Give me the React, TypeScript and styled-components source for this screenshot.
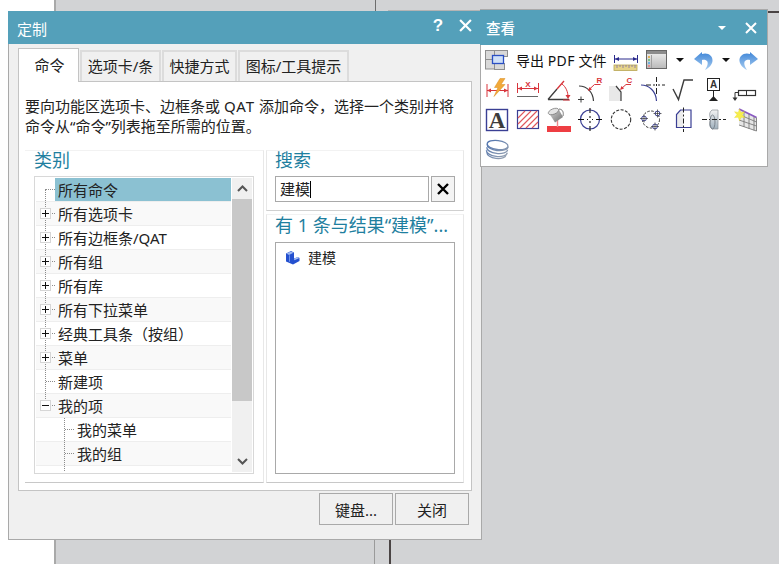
import React from "react";
import styled, { createGlobalStyle } from "styled-components";

const Global = createGlobalStyle`
  html, body { margin: 0; padding: 0; background: #fff; }
  * { box-sizing: border-box; }
`;

const FONT = `"Noto Sans", "Noto Sans CJK SC", sans-serif`;
const TEAL = "#54a0ba";
const HEAD = "#1f7f9f";

const Desktop = styled.div`
  position: relative;
  width: 779px;
  height: 564px;
  overflow: hidden;
  background: #fff;
  font-family: ${FONT};
  font-size: 15px;
  color: #222;
`;
const Workspace = styled.div`
  position: absolute;
  left: 54px;
  top: 0;
  right: 0;
  bottom: 0;
  background: #d2d3d5;
  border-left: 2px solid #a9a9a9;
`;
const Seam = styled.div<{ $x: number; $y: number; $h: number; $w: number; $c: string }>`
  position: absolute;
  left: ${(p) => p.$x}px;
  top: ${(p) => p.$y}px;
  width: ${(p) => p.$w}px;
  height: ${(p) => p.$h}px;
  background: ${(p) => p.$c};
`;

/* dialog window */
const Dialog = styled.div`
  position: absolute;
  left: 8px;
  top: 11px;
  width: 474px;
  height: 529px;
  display: flex;
  flex-direction: column;
`;
const TitleBar = styled.div`
  flex: 0 0 33px;
  background: ${TEAL};
  color: #fff;
  display: flex;
  align-items: center;
  padding: 3px 10px 0 9px;
  font-size: 15px;
`;
const TitleText = styled.span`
  flex: 1;
  line-height: 30px;
`;
const HelpMark = styled.span`
  font-family: "Liberation Sans", sans-serif;
  font-weight: 700;
  font-size: 17px;
  width: 16px;
  margin-right: 13px;
  margin-top: -7px;
  text-align: center;
`;
const TitleIcons = styled.svg`
  display: block;
  margin-top: -7px;
  flex: none;
`;
const DialogBody = styled.div`
  flex: 1;
  background: #f0f0f0;
  border: 1px solid #a9a9a9;
  border-top: none;
  padding: 4px 9px 0 9px;
  display: flex;
  flex-direction: column;
`;
const Tabs = styled.div`
  display: flex;
  align-items: flex-end;
  height: 34px;
  gap: 1px;
  position: relative;
  z-index: 1;
`;
const Tab = styled.div<{ $active?: boolean; $w: number }>`
  width: ${(p) => p.$w}px;
  height: ${(p) => (p.$active ? 34 : 31)}px;
  margin-bottom: ${(p) => (p.$active ? 0 : 1)}px;
  padding: ${(p) => (p.$active ? "0 0 2px 2px" : "0 0 2px")};
  background: ${(p) => (p.$active ? "#fff" : "#f0f0f0")};
  border: ${(p) => (p.$active ? "1px solid #c4c4c4" : "2px solid #dcdcdc")};
  border-bottom: ${(p) => (p.$active ? "none" : "0")};
  display: flex;
  align-items: center;
  justify-content: center;
  white-space: nowrap;
  line-height: 26px;
`;
const Panel = styled.div`
  height: 410px;
  margin-top: -1px;
  background: #fff;
  border: 1px solid #c4c4c4;
  display: flex;
  flex-direction: column;
`;
const Intro = styled.p`
  margin: 0;
  padding: 14px 0 0 6px;
  line-height: 20px;
  height: 54px;
  white-space: nowrap;
`;
const Latin = styled.span`
  letter-spacing: 1px;
`;
const Groups = styled.div`
  margin: 14px 0 0 6px;
  display: flex;
  width: 439px;
  height: 333px;
  gap: 2px;
`;
const LeftGroup = styled.section`
  width: 239px;
  border-top: 1px solid #f2f2f2;
  border-right: 1px solid #e8e8e8;
  border-bottom: 1px solid #c8c8c8;
  padding-left: 9px;
`;
const RightGroup = styled.section`
  flex: 1;
  display: flex;
  flex-direction: column;
`;
const SearchSection = styled.div`
  height: 61px;
  border-top: 1px solid #f2f2f2;
  border-right: 1px solid #e8e8e8;
  border-left: 1px solid #e8e8e8;
  border-bottom: 1px solid #d0d0d0;
  padding: 0 8px;
`;
const ResultSection = styled.div`
  margin-top: 3px;
  flex: 1;
  border-top: 1px solid #f2f2f2;
  border-right: 1px solid #e8e8e8;
  border-left: 1px solid #e8e8e8;
  border-bottom: 1px solid #c8c8c8;
  padding: 0 8px;
`;
const GroupHeading = styled.h3<{ $h?: number; $lh?: number }>`
  margin: 0;
  height: ${(p) => p.$h ?? 25}px;
  line-height: ${(p) => p.$lh ?? 18}px;
  font-weight: 400;
  font-size: 18px;
  color: ${HEAD};
  white-space: nowrap;
`;
const TreeBox = styled.div`
  width: 220px;
  height: 298px;
  border: 1px solid #d8d8d8;
  padding: 1px;
  display: flex;
  gap: 1px;
  overflow: hidden;
`;
const Rows = styled.div`
  width: 195px;
  height: 293px;
  overflow: hidden;
`;
const Row = styled.div<{ $alt: boolean; $level: number }>`
  position: relative;
  height: 24px;
  padding-left: ${(p) => 19 + p.$level * 19}px;
  background: ${(p) => (p.$alt ? "#f9f9f9" : "#fff")};
  border-bottom: 1px solid #eeeeee;
  display: flex;
`;
const Label = styled.div<{ $sel?: boolean }>`
  flex: 1;
  padding-left: 3px;
  padding-top: 1px;
  line-height: 23px;
  height: 23px;
  white-space: nowrap;
  background: ${(p) => (p.$sel ? "#8bc1d2" : "transparent")};
`;
const VLine = styled.i<{ $x: number; $top: number; $bottom: number }>`
  position: absolute;
  left: ${(p) => p.$x}px;
  top: ${(p) => p.$top}px;
  bottom: ${(p) => p.$bottom}px;
  border-left: 1px dotted #8c8c8c;
`;
const HLine = styled.i<{ $x: number; $w: number }>`
  position: absolute;
  left: ${(p) => p.$x}px;
  width: ${(p) => p.$w}px;
  top: 11px;
  border-top: 1px dotted #8c8c8c;
`;
const Expander = styled.i<{ $open?: boolean }>`
  position: absolute;
  left: 4px;
  top: 6px;
  width: 11px;
  height: 11px;
  background: #fff;
  border: 1px solid #d6d6d6;
  &::before {
    content: "";
    position: absolute;
    left: 1px;
    right: 1px;
    top: 4px;
    height: 1px;
    background: #111;
  }
  &::after {
    content: "";
    display: ${(p) => (p.$open ? "none" : "block")};
    position: absolute;
    top: 1px;
    bottom: 1px;
    left: 4px;
    width: 1px;
    background: #111;
  }
`;
const ScrollBar = styled.div`
  width: 20px;
  height: 294px;
  background: #f0f0f0;
  display: flex;
  flex-direction: column;
`;
const ScrollButton = styled.div<{ $h: number; $end?: boolean }>`
  height: ${(p) => p.$h}px;
  display: flex;
  align-items: ${(p) => (p.$end ? "flex-end" : "center")};
  justify-content: center;
  padding-bottom: ${(p) => (p.$end ? 7 : 0)}px;
`;
const ScrollThumb = styled.div`
  height: 202px;
  background: #c8c8c8;
`;
const SearchRow = styled.div`
  display: flex;
  gap: 2px;
  height: 26px;
`;
const SearchInput = styled.div`
  width: 154px;
  border: 1px solid #a9a9a9;
  background: #fff;
  padding-left: 4px;
  line-height: 24px;
  display: flex;
  align-items: center;
`;
const Caret = styled.span`
  display: block;
  width: 1px;
  height: 17px;
  background: #000;
`;
const ClearButton = styled.div`
  width: 24px;
  border: 1px solid #a9a9a9;
  background: #f4f4f4;
  display: flex;
  align-items: center;
  justify-content: center;
`;
const ResultList = styled.div`
  height: 232px;
  border: 1px solid #a9a9a9;
  background: #fff;
  padding: 2px 0 0 9px;
`;
const ResultItem = styled.div`
  display: flex;
  align-items: center;
  gap: 8px;
  height: 24px;
  font-size: 14px;
`;
const Footer = styled.div`
  display: flex;
  justify-content: flex-end;
  gap: 2px;
  padding-right: 3px;
  margin-top: 2px;
`;
const FooterButton = styled.div`
  width: 74px;
  height: 32px;
  border: 1px solid #a9a9a9;
  background: #f0f0f0;
  display: flex;
  align-items: center;
  justify-content: center;
`;

/* floating toolbar window */
const Palette = styled.div`
  position: absolute;
  left: 480px;
  top: 10px;
  width: 288px;
  height: 157px;
  background: #fff;
  border-right: 1px solid #a9a9a9;
  border-bottom: 1px solid #a9a9a9;
  border-left: 1px solid #a9a9a9;
  box-shadow: 0 -1px 0 #a9a9a9;
`;
const PaletteTitle = styled.div`
  height: 35px;
  margin-left: -1px;
  background: ${TEAL};
  color: #fff;
  font-size: 14.5px;
  font-weight: 500;
  display: flex;
  align-items: center;
  justify-content: space-between;
  padding: 0 10px 0 6px;
`;
const PaletteControls = styled.span`
  display: flex;
  align-items: center;
  gap: 19px;
  & > svg {
    margin-top: 0;
  }
`;
const WhiteCaret = styled.i`
  display: block;
  border-left: 4px solid transparent;
  border-right: 4px solid transparent;
  border-top: 4px solid #fff;
`;
const PaletteBody = styled.div`
  padding-left: 1px;
`;
const CommandRow = styled.div`
  display: flex;
  height: 30px;
  align-items: center;
`;
const CommandLabel = styled.span`
  width: 99px;
  padding-left: 4px;
  white-space: nowrap;
  font-size: 14px;
  color: #111;
`;
const Pdf = styled.span`
  letter-spacing: 0.4px;
`;
const DropCaret = styled.span`
  width: 16px;
  display: flex;
  justify-content: center;
  &::before {
    content: "";
    border-left: 4px solid transparent;
    border-right: 4px solid transparent;
    border-top: 4px solid #111;
  }
`;
const IconGrid = styled.div`
  display: grid;
  grid-template-columns: repeat(9, 31px);
  grid-auto-rows: 30px;
`;
const Ic = styled.svg.attrs({ viewBox: "0 0 30 30", width: 30, height: 30 })<{ $gap?: number }>`
  display: block;
  flex: none;
  margin-left: ${(p) => p.$gap ?? 0}px;
  font-family: "Liberation Sans", sans-serif;
`;

const RED = "#d8353c";
const NAVY = "#3a3f94";
const DARK = "#3d3d3d";

const tree: { t: string; level: number; kind: "leaf" | "plus" | "minus" }[] = [
  { t: "所有命令", level: 0, kind: "leaf" },
  { t: "所有选项卡", level: 0, kind: "plus" },
  { t: "所有边框条/QAT", level: 0, kind: "plus" },
  { t: "所有组", level: 0, kind: "plus" },
  { t: "所有库", level: 0, kind: "plus" },
  { t: "所有下拉菜单", level: 0, kind: "plus" },
  { t: "经典工具条（按组）", level: 0, kind: "plus" },
  { t: "菜单", level: 0, kind: "plus" },
  { t: "新建项", level: 0, kind: "leaf" },
  { t: "我的项", level: 0, kind: "minus" },
  { t: "我的菜单", level: 1, kind: "leaf" },
  { t: "我的组", level: 1, kind: "leaf" },
  { t: "我的库", level: 1, kind: "leaf" },
];

const Arrowed = ({ x1, x2, y }: { x1: number; x2: number; y: number }) => (
  <g fill={RED} stroke="none">
    <path d={`M${x1} ${y}l4 -2v4z`} />
    <path d={`M${x2} ${y}l-4 -2v4z`} />
  </g>
);

const UNDO =
  "M6 14L14 7V9C20 7 25 11 24.500 16C24 20 21 23 17 25C19.500 21 20.500 18 19 16C17.500 14.500 15.500 14.500 14 15V20Z";

const paletteIcons: React.ReactNode[] = [
  <Ic key="a1">
    <g stroke={RED} strokeWidth="1" fill="none">
      <path d="M5 9v13M26 9v13M5 15.500h21" />
    </g>
    <Arrowed x1={5} x2={26} y={15.5} />
    <path d="M18 3.500h5l-4 6h4l-11 12 4-9h-3.500z" fill="#f2a93a" stroke="#d98a1d" strokeWidth=".5" />
  </Ic>,
  <Ic key="a2">
    <path d="M4.500 8v10M25.500 8v10M4.500 13.500h21" stroke={RED} fill="none" />
    <Arrowed x1={5} x2={25} y={13.5} />
    <text x="15" y="12" textAnchor="middle" fontSize="8" fontWeight="700" fill={RED}>X</text>
    <path d="M4 21.500h21" stroke="#666" />
  </Ic>,
  <Ic key="a3">
    <path d="M4 24.500h21M4 24.500L13 14" stroke={DARK} strokeWidth="1.300" fill="none" />
    <path d="M13 14l7-8" stroke={RED} strokeWidth="1.300" />
    <path d="M18 9c4 3 6 8 6 13" stroke={RED} fill="none" />
    <path d="M21.500 20h5l-2.500 4z" fill={RED} />
    <path d="M19 25h7" stroke={RED} />
  </Ic>,
  <Ic key="a4">
    <path d="M4 11c8 0 14 6 14.500 15" stroke={DARK} strokeWidth="1.200" fill="none" />
    <path d="M3 24.500h6M6 21.500v6" stroke={DARK} />
    <path d="M13.500 15l6-5.500h6" stroke={RED} fill="none" />
    <path d="M13 16l1.500-4 2.500 2.500z" fill={RED} />
    <text x="21.500" y="7.500" fontSize="8" fontWeight="700" fill={RED}>R</text>
  </Ic>,
  <Ic key="a5">
    <path d="M3 11h7l5 6v9H3z" fill="#e8e8e8" />
    <path d="M10 11l5 6v9" stroke={DARK} strokeWidth="1.200" fill="none" />
    <path d="M15 14l5-4.500h5" stroke={RED} fill="none" />
    <path d="M14 15l1.500-4 2.500 2.500z" fill={RED} />
    <text x="20.500" y="7.500" fontSize="8" fontWeight="700" fill={RED}>C</text>
  </Ic>,
  <Ic key="a6">
    <path d="M4 10c8 0 15 6 15.500 16" stroke={NAVY} strokeWidth="1.200" fill="none" />
    <path d="M19.500 2v5M19.500 9v2M19.500 13v6M9 10h5M16 10h2M21 10h2M25 10h3" stroke="#222" />
  </Ic>,
  <Ic key="a7">
    <path d="M5 14l5.500 10.500L16 5h9" stroke={DARK} strokeWidth="1.400" fill="none" />
  </Ic>,
  <Ic key="a8">
    <rect x="8.500" y="3.500" width="12" height="12" fill="#fff" stroke="#222" />
    <text x="14.500" y="13" textAnchor="middle" fontSize="10" fontWeight="700" fill="#333">A</text>
    <path d="M14.500 16v6" stroke="#222" />
    <path d="M10 26l4.500-5 4.500 5z" fill="#222" />
  </Ic>,
  <Ic key="a9">
    <rect x="8.500" y="15.500" width="17" height="5" fill="#fff" stroke="#333" strokeWidth="1.200" />
    <path d="M16.500 15.500v5" stroke="#333" />
    <path d="M8.500 17.500H5v6" stroke="#333" fill="none" />
    <path d="M2.500 22.500h5L5 26z" fill="#333" />
  </Ic>,

  <Ic key="b1">
    <rect x="4.500" y="4.500" width="21" height="21" fill="#fff" stroke={NAVY} strokeWidth="1.400" />
    <text x="15" y="23" textAnchor="middle" fontSize="23" fontWeight="700" fill="#3c3c3c" fontFamily="Liberation Serif, serif">A</text>
  </Ic>,
  <Ic key="b2">
    <rect x="4.500" y="5.500" width="21" height="18" fill="#fff" stroke={NAVY} strokeWidth="1.200" />
    <path d="M5 13l7-7M5 19l13-13M7 23L24 6M13 23l12-12M19 23l6-6" stroke="#e0575c" strokeWidth="1.100" fill="none" />
  </Ic>,
  <Ic key="b3">
    <defs>
      <linearGradient id="pail" x1="0" y1="0" x2="1" y2="1">
        <stop offset="0" stopColor="#d9d9d9" />
        <stop offset="1" stopColor="#6f6f6f" />
      </linearGradient>
    </defs>
    <rect x="3" y="21" width="24" height="6" fill="#ee3e43" />
    <path d="M13.500 15v7" stroke="#ee8a8d" strokeWidth="1.400" />
    <path d="M5 8l9.500-4 4.500 8-8 5.500z" fill="url(#pail)" />
    <ellipse cx="9.500" cy="6.500" rx="5.500" ry="2.700" transform="rotate(-22 9.500 6.500)" fill="#e4e4e4" stroke="#777" strokeWidth=".7" />
    <path d="M15 4c3.500 0 5 3.500 4 7" stroke="#777" fill="none" />
  </Ic>,
  <Ic key="b4">
    <circle cx="15" cy="14.500" r="9.500" fill="none" stroke={NAVY} strokeWidth="1.200" />
    <path d="M15 3v5M15 11v2M15 16v2M15 21v5M3 14.500h6M12 14.500h1M17 14.500h1M21 14.500h6" stroke="#111" strokeWidth="1.100" />
  </Ic>,
  <Ic key="b5">
    <circle cx="15" cy="14.500" r="9.700" fill="none" stroke="#333" strokeWidth="1.100" strokeDasharray="3 1.500" />
  </Ic>,
  <Ic key="b6">
    <circle cx="14" cy="14.500" r="8.500" fill="none" stroke="#333" strokeDasharray="2.500 1.500" />
    {[[7, 13.5], [20.5, 8.5], [18, 21.5]].map(([x, y]) => (
      <g key={x}>
        <circle cx={x} cy={y} r="2.400" fill="#fff" stroke={NAVY} />
        <path d={`M${x} ${y - 4}v8M${x - 4} ${y}h8`} stroke="#333" strokeWidth=".7" />
      </g>
    ))}
  </Ic>,
  <Ic key="b7">
    <path d="M8.500 22.500V9.500l4-4.500H15v17.500z" fill="#ececec" />
    <path d="M8.500 22.500V9.500l4-4.500H23v17.500z" fill="none" stroke={NAVY} strokeWidth="1.200" />
    <path d="M15.500 2.500v5M15.500 9.500v2M15.500 13.500v5M15.500 20.500v2M15.500 24v3" stroke="#222" />
  </Ic>,
  <Ic key="b8">
    <defs>
      <linearGradient id="lens" x1="0" y1="0" x2="0" y2="1">
        <stop offset="0" stopColor="#f2f2f2" />
        <stop offset="1" stopColor="#9fb0bd" />
      </linearGradient>
    </defs>
    <path d="M13 5h6v19h-6c-3-2.500-3-5.500-1-9.500-2-4-2-7 1-9.500z" fill="url(#lens)" stroke="#8a8f96" strokeWidth=".7" />
    <ellipse cx="13.500" cy="17" rx="2.500" ry="7" fill="none" stroke="#6e7780" strokeWidth=".8" />
    <path d="M3 14.500h5M10 14.500h1M13 14.500h5M20 14.500h2M24 14.500h3" stroke="#222" />
  </Ic>,
  <Ic key="b9">
    <path d="M9 4l17.500 8.500V26L9 20z" fill="#e6e6e6" />
    <path d="M9 4l17.500 8.500" stroke="#8a58c4" strokeWidth="1.800" />
    <path d="M9 9.500l17.500 7.500M9 15l17.500 6M9 20l17.500 6M14 6.500v15.500M19 9v15M24 11.500v14M26.500 12.500V26" stroke="#7c7c7c" strokeWidth=".9" fill="none" />
    <path d="M9.500 4l1.300 3.500 3.700-.8-2.300 3 2.600 2.800-3.700-.2-1.600 3.500-1.300-3.600-3.700.4 2.500-2.900-2.400-3 3.700.7z" fill="#f7ee4c" stroke="#e5d92c" strokeWidth=".4" />
  </Ic>,

  <Ic key="c1">
    <defs>
      <linearGradient id="coil" gradientUnits="userSpaceOnUse" x1="4" y1="6" x2="26" y2="26">
        <stop offset="0" stopColor="#4b70ad" />
        <stop offset="1" stopColor="#a2a9b2" />
      </linearGradient>
    </defs>
    <g transform="rotate(7 15 15)" fill="none" stroke="url(#coil)" strokeWidth="1.300">
      <ellipse cx="15" cy="10" rx="10.500" ry="4.500" />
      <path d="M4.500 10.500A10.500 5 0 0 0 25.500 10.500" />
      <path d="M4.500 13.500A10.500 5 0 0 0 25.500 13.500" />
      <path d="M4.500 16.500A10.500 5 0 0 0 25.500 16.500" />
      <path d="M5.500 19A9.500 4.500 0 0 0 24.500 19" />
    </g>
  </Ic>,
];

const WindowX = ({ s, w = 2 }: { s: number; w?: number }) => (
  <TitleIcons width={s} height={s} viewBox="0 0 12 12">
    <path d="M1 1l10 10M11 1L1 11" stroke="#fff" strokeWidth={w} fill="none" />
  </TitleIcons>
);

export default function App() {
  return (
    <Desktop>
      <Global />
      <Workspace />
      <Seam $x={375} $y={0} $w={1} $h={11} $c="#6d6d6d" />
      <Seam $x={388} $y={10} $w={92} $h={1} $c="#b4b4b4" />
      <Seam $x={374} $y={540} $w={1} $h={24} $c="#9a9a9a" />
      <Seam $x={389} $y={540} $w={2} $h={24} $c="#4a4444" />
      <Seam $x={768} $y={11} $w={11} $h={2} $c="#4a4444" />
      <Dialog>
        <TitleBar>
          <TitleText>定制</TitleText>
          <HelpMark>?</HelpMark>
          <WindowX s={13} />
        </TitleBar>
        <DialogBody>
          <Tabs>
            <Tab $active $w={61}>命令</Tab>
            <Tab $w={81}>选项卡/条</Tab>
            <Tab $w={75}>快捷方式</Tab>
            <Tab $w={111}>图标/工具提示</Tab>
          </Tabs>
          <Panel>
            <Intro>
              要向功能区选项卡、边框条或 <Latin>QAT</Latin> 添加命令，选择一个类别并将
              <br />
              命令从“命令”列表拖至所需的位置。
            </Intro>
            <Groups>
              <LeftGroup>
                <GroupHeading>类别</GroupHeading>
                <TreeBox>
                  <Rows>
                    {tree.map((r, i) => (
                      <Row key={r.t} $alt={i % 2 === 1} $level={r.level}>
                        {r.level === 0 ? (
                          <>
                            <VLine $x={9} $top={i === 0 ? 11 : 0} $bottom={r.kind === "minus" ? 12 : 0} />
                            <HLine $x={10} $w={9} />
                          </>
                        ) : (
                          <>
                            <VLine $x={28} $top={0} $bottom={0} />
                            <HLine $x={29} $w={9} />
                          </>
                        )}
                        {r.kind !== "leaf" && <Expander $open={r.kind === "minus"} />}
                        <Label $sel={i === 0}>{r.t}</Label>
                      </Row>
                    ))}
                  </Rows>
                  <ScrollBar>
                    <ScrollButton $h={21}>
                      <svg width="11" height="7" viewBox="0 0 11 7">
                        <path d="M1 6l4.500-4.500L10 6" stroke="#555" strokeWidth="2" fill="none" />
                      </svg>
                    </ScrollButton>
                    <ScrollThumb />
                    <ScrollButton $h={71} $end>
                      <svg width="11" height="7" viewBox="0 0 11 7">
                        <path d="M1 1l4.500 4.500L10 1" stroke="#555" strokeWidth="2" fill="none" />
                      </svg>
                    </ScrollButton>
                  </ScrollBar>
                </TreeBox>
              </LeftGroup>
              <RightGroup>
                <SearchSection>
                  <GroupHeading>搜索</GroupHeading>
                  <SearchRow>
                    <SearchInput>
                      建模
                      <Caret />
                    </SearchInput>
                    <ClearButton>
                      <svg width="14" height="14" viewBox="0 0 14 14">
                        <path d="M2 2l10 10M12 2L2 12" stroke="#000" strokeWidth="2.400" fill="none" />
                      </svg>
                    </ClearButton>
                  </SearchRow>
                </SearchSection>
                <ResultSection>
                  <GroupHeading $h={27} $lh={20}>有 1 条与结果“建模”...</GroupHeading>
                  <ResultList>
                    <ResultItem>
                      <svg width="15" height="15" viewBox="0 0 15 15">
                        <path d="M1 3.500L6 1l3 1.500v6L13 7l1.500 1v3L8 14.500 1 11.500z" fill="#2450cf" />
                        <path d="M1.500 3.500L6 1.500l2.500 1.200L4 5z" fill="#9db9f2" />
                        <path d="M4 5.500l1-.6v6.500l-1 .6z" fill="#6f93ea" />
                        <path d="M9 8.700L13 7l1.400 1-5 2.300z" fill="#a9c2f4" />
                      </svg>
                      建模
                    </ResultItem>
                  </ResultList>
                </ResultSection>
              </RightGroup>
            </Groups>
          </Panel>
          <Footer>
            <FooterButton>键盘...</FooterButton>
            <FooterButton>关闭</FooterButton>
          </Footer>
        </DialogBody>
      </Dialog>
      <Palette>
        <PaletteTitle>
          <span>查看</span>
          <PaletteControls>
            <WhiteCaret />
            <WindowX s={12} />
          </PaletteControls>
        </PaletteTitle>
        <PaletteBody>
          <CommandRow>
            <Ic>
              <rect x="3.500" y="5.500" width="9" height="9" fill="#d9d9d9" stroke="#8f8f8f" />
              <rect x="12.500" y="5.500" width="13" height="6" fill="#d9d9d9" stroke="#8f8f8f" />
              <rect x="3.500" y="14.500" width="9" height="9.500" fill="#d9d9d9" stroke="#8f8f8f" />
              <rect x="12.500" y="18.500" width="10" height="6" fill="#d9d9d9" stroke="#8f8f8f" />
              <rect x="10.500" y="10.500" width="11" height="8" fill="#cfe0f7" stroke="#2a4fc4" strokeWidth="1.300" />
            </Ic>
            <CommandLabel>
              导出 <Pdf>PDF</Pdf> 文件
            </CommandLabel>
            <Ic>
              <path d="M3.500 10v8M26.500 10v8" stroke="#2a2a8c" />
              <path d="M4 14h22" stroke="#2a2a8c" />
              <path d="M4 14l4-2v4zM26 14l-4-2v4z" fill="#2a2a8c" />
              <rect x="3" y="20" width="23" height="5.500" fill="#e5d38a" stroke="#b7a552" strokeWidth=".8" />
              <path d="M6 20v3M9 20v2M12 20v3M15 20v2M18 20v3M21 20v2M24 20v3" stroke="#7d6ea8" strokeWidth=".8" />
            </Ic>
            <Ic $gap={1}>
              <defs>
                <linearGradient id="win" x1="0" y1="0" x2="0" y2="1">
                  <stop offset="0" stopColor="#f2f2f2" />
                  <stop offset="1" stopColor="#b9b9b9" />
                </linearGradient>
                <linearGradient id="arrowBlue" x1="0" y1="0" x2="0" y2="1">
                  <stop offset="0" stopColor="#3f86d8" />
                  <stop offset="1" stopColor="#a9cdf0" />
                </linearGradient>
              </defs>
              <rect x="4.500" y="5.500" width="20" height="18" fill="url(#win)" stroke="#666" />
              <rect x="5" y="6" width="19" height="3" fill="#8c8c8c" />
              <path d="M6 11h2v2H6z" fill="#e0b25c" />
              <path d="M6 14h2v2H6z" fill="#7cc48a" />
              <path d="M6 17h2v2H6z" fill="#6fb0e0" />
              <path d="M6 20h2v2H6z" fill="#e08d8d" />
              <path d="M9.500 10v13" stroke="#a0a0a0" />
            </Ic>
            <DropCaret />
            <Ic>
              <path d={UNDO} fill="url(#arrowBlue)" />
            </Ic>
            <DropCaret />
            <Ic>
              <g transform="translate(30 0) scale(-1 1)">
                <path d={UNDO} fill="url(#arrowBlue)" />
              </g>
            </Ic>
          </CommandRow>
          <IconGrid>{paletteIcons}</IconGrid>
        </PaletteBody>
      </Palette>
    </Desktop>
  );
}
